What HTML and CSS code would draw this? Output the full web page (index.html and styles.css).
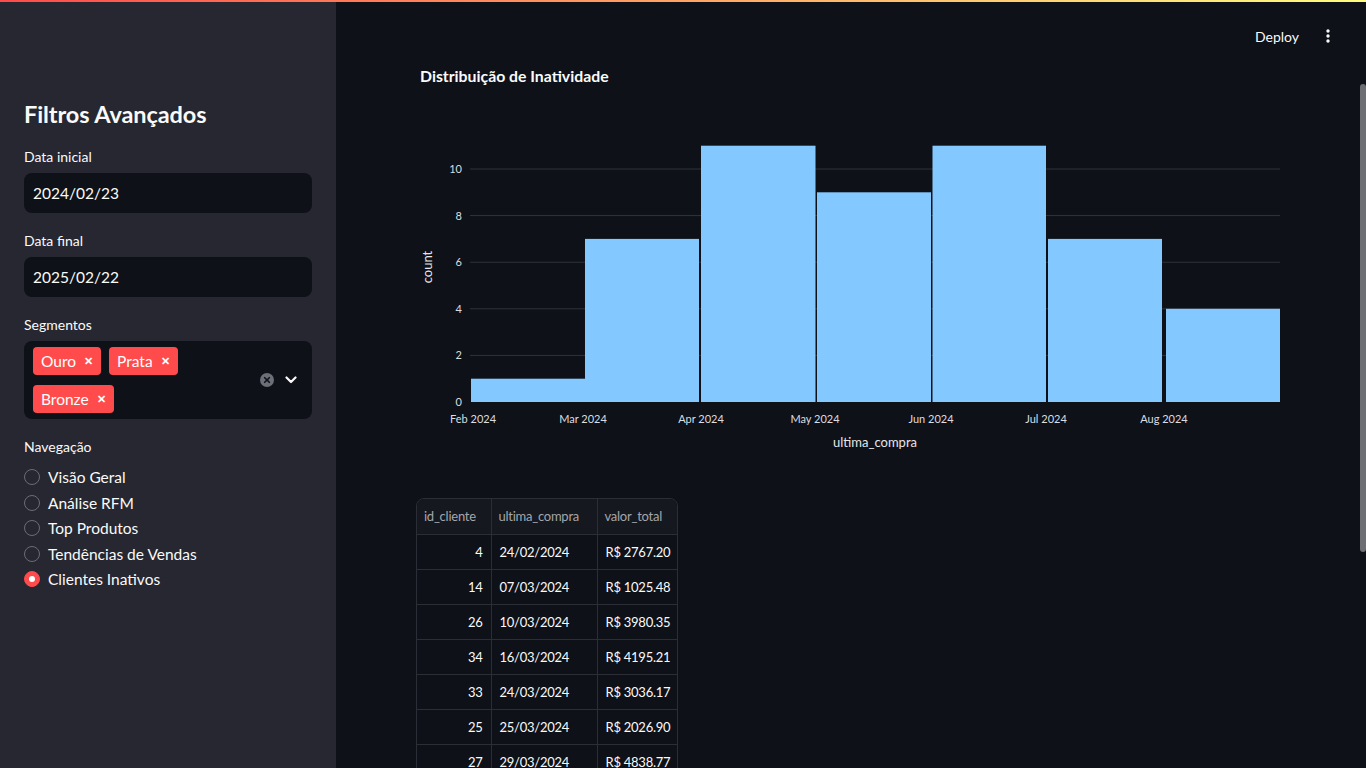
FILE: index.html
```html
<!DOCTYPE html>
<html lang="pt">
<head>
<meta charset="utf-8">
<title>Clientes Inativos</title>
<link rel="stylesheet" href="styles.css">
</head>
<body>
<div class="decoration"></div>
<div class="app">
  <aside class="sidebar">
    <h2 class="side-title">Filtros Avançados</h2>
    <div class="field">
      <label class="field-label">Data inicial</label>
      <div class="input">2024/02/23</div>
    </div>
    <div class="field">
      <label class="field-label">Data final</label>
      <div class="input">2025/02/22</div>
    </div>
    <div class="field">
      <label class="field-label">Segmentos</label>
      <div class="multiselect">
        <div class="tags">
          <span class="tag">Ouro <span class="tag-x">✕</span></span>
          <span class="tag">Prata <span class="tag-x">✕</span></span>
          <span class="tag">Bronze <span class="tag-x">✕</span></span>
        </div>
        <div class="ms-icons">
          <svg class="clear-ico" width="14" height="14" viewBox="0 0 14 14"><circle cx="7" cy="7" r="7" fill="#6c6e78"/><path d="M4.7 4.7l4.6 4.6M9.3 4.7l-4.6 4.6" stroke="#0e1117" stroke-width="1.6" stroke-linecap="round"/></svg>
          <svg class="chev-ico" width="12" height="8" viewBox="0 0 12 8"><path d="M1.5 1.5l4.5 4.5 4.5-4.5" fill="none" stroke="#fafafa" stroke-width="2.2" stroke-linecap="round" stroke-linejoin="round"/></svg>
        </div>
      </div>
    </div>
    <div class="field nav">
      <label class="field-label">Navegação</label>
      <div class="radios">
        <div class="radio"><span class="dot"></span>Visão Geral</div>
        <div class="radio"><span class="dot"></span>Análise RFM</div>
        <div class="radio"><span class="dot"></span>Top Produtos</div>
        <div class="radio"><span class="dot"></span>Tendências de Vendas</div>
        <div class="radio checked"><span class="dot"></span>Clientes Inativos</div>
      </div>
    </div>
  </aside>
  <main class="main">
    <header class="topbar">
      <span class="deploy">Deploy</span>
      <svg class="kebab" width="4" height="14" viewBox="0 0 4 14"><circle cx="2" cy="2" r="1.7" fill="#fafafa"/><circle cx="2" cy="7" r="1.7" fill="#fafafa"/><circle cx="2" cy="12" r="1.7" fill="#fafafa"/></svg>
    </header>
    <section class="content">
      <svg class="chart" width="870" height="410" viewBox="0 0 870 410">
        <text class="c-title" x="4" y="26">Distribuição de Inatividade</text>
        <g class="grid">
          <line x1="54" x2="864" y1="299.4" y2="299.4"/>
          <line x1="54" x2="864" y1="252.8" y2="252.8"/>
          <line x1="54" x2="864" y1="206.2" y2="206.2"/>
          <line x1="54" x2="864" y1="159.6" y2="159.6"/>
          <line x1="54" x2="864" y1="113" y2="113"/>
        </g>
        <g class="bars">
          <rect x="55" y="322.7" width="114" height="23.3"/>
          <rect x="169" y="182.9" width="114" height="163.1"/>
          <rect x="285" y="89.7" width="114.5" height="256.3"/>
          <rect x="401" y="136.3" width="114" height="209.7"/>
          <rect x="516.5" y="89.7" width="113.5" height="256.3"/>
          <rect x="632" y="182.9" width="114" height="163.1"/>
          <rect x="750" y="252.8" width="114" height="93.2"/>
        </g>
        <g class="yticks">
          <text x="46" y="350">0</text>
          <text x="46" y="303.4">2</text>
          <text x="46" y="256.8">4</text>
          <text x="46" y="210.2">6</text>
          <text x="46" y="163.6">8</text>
          <text x="46" y="117">10</text>
        </g>
        <g class="xticks">
          <text x="57" y="367">Feb 2024</text>
          <text x="167" y="367">Mar 2024</text>
          <text x="285" y="367">Apr 2024</text>
          <text x="399" y="367">May 2024</text>
          <text x="515" y="367">Jun 2024</text>
          <text x="630" y="367">Jul 2024</text>
          <text x="748" y="367">Aug 2024</text>
        </g>
        <text class="x-title" x="459" y="391">ultima_compra</text>
        <text class="y-title" transform="translate(15.5 211) rotate(-90)">count</text>
      </svg>
      <div class="table-wrap">
        <table class="df">
          <colgroup><col class="c1"><col class="c2"><col class="c3"></colgroup>
          <thead>
            <tr><th>id_cliente</th><th>ultima_compra</th><th>valor_total</th></tr>
          </thead>
          <tbody>
            <tr><td class="num">4</td><td>24/02/2024</td><td class="num">R$ 2767.20</td></tr>
            <tr><td class="num">14</td><td>07/03/2024</td><td class="num">R$ 1025.48</td></tr>
            <tr><td class="num">26</td><td>10/03/2024</td><td class="num">R$ 3980.35</td></tr>
            <tr><td class="num">34</td><td>16/03/2024</td><td class="num">R$ 4195.21</td></tr>
            <tr><td class="num">33</td><td>24/03/2024</td><td class="num">R$ 3036.17</td></tr>
            <tr><td class="num">25</td><td>25/03/2024</td><td class="num">R$ 2026.90</td></tr>
            <tr><td class="num">27</td><td>29/03/2024</td><td class="num">R$ 4838.77</td></tr>
            <tr><td class="num">8</td><td>02/04/2024</td><td class="num">R$ 1543.02</td></tr>
          </tbody>
        </table>
      </div>
    </section>
    <div class="scrollbar"></div>
  </main>
</div>
</body>
</html>
```
FILE: styles.css
```css
* { box-sizing: border-box; }
html, body {
  margin: 0;
  padding: 0;
  width: 1366px;
  height: 768px;
  overflow: hidden;
  background: #0e1117;
  color: #fafafa;
  font-family: Lato, "Noto Sans", sans-serif;
}
.decoration {
  position: absolute;
  top: 0;
  left: 0;
  right: 0;
  height: 2px;
  background: linear-gradient(90deg, #ff4b4b, #fffd80);
  z-index: 5;
}
.app {
  display: flex;
  height: 768px;
}
.sidebar {
  width: 336px;
  flex: 0 0 336px;
  background: #262730;
  padding: 98px 24px 0 24px;
}
.side-title {
  margin: 0 0 17px 0;
  font-size: 23.5px;
  font-weight: 700;
  line-height: 32px;
  letter-spacing: -0.1px;
}
.field { margin-bottom: 18px; }
.field-label {
  display: block;
  font-size: 14px;
  line-height: 20px;
  margin-bottom: 6px;
}
.input {
  height: 40px;
  background: #0e1117;
  border-radius: 8px;
  padding: 0 9px;
  font-size: 15.5px;
  line-height: 40px;
}
.multiselect {
  background: #0e1117;
  border-radius: 8px;
  min-height: 77px;
  display: flex;
  align-items: center;
  padding: 6px 15px 6px 9px;
  margin-top: 1px;
}
.tags {
  flex: 1;
  display: flex;
  flex-wrap: wrap;
  gap: 10px 8px;
}
.tag {
  display: inline-flex;
  align-items: center;
  height: 28px;
  padding: 0 8px;
  background: #ff4b4b;
  border-radius: 4px;
  font-size: 15.5px;
  color: #fff;
}
.tag-x {
  font-size: 11px;
  margin-left: 8px;
  font-weight: 700;
}
.ms-icons {
  display: flex;
  align-items: center;
  gap: 11px;
}
.nav { margin-top: 0; }
.radios {
  display: flex;
  flex-direction: column;
  gap: 5.5px;
  margin-top: 10px;
}
.radio {
  display: flex;
  align-items: center;
  font-size: 15.5px;
  line-height: 20px;
}
.dot {
  width: 16px;
  height: 16px;
  border-radius: 50%;
  border: 1px solid #6b6d76;
  margin-right: 8px;
  flex: 0 0 16px;
}
.radio.checked .dot {
  background: #ff4b4b;
  border-color: #ff4b4b;
  position: relative;
}
.radio.checked .dot::after {
  content: "";
  position: absolute;
  left: 4px;
  top: 4px;
  width: 6px;
  height: 6px;
  border-radius: 50%;
  background: #fff;
}
.main {
  flex: 1;
  position: relative;
  overflow: hidden;
}
.topbar {
  height: 56px;
  display: flex;
  justify-content: flex-end;
  align-items: center;
  padding: 16px 36px 0 0;
  gap: 27px;
}
.deploy {
  font-size: 14px;
}
.content {
  padding: 0 80px 0 80px;
}
.chart {
  display: block;
}
.chart text {
  font-family: Lato, "Noto Sans", sans-serif;
}
.c-title {
  font-size: 15.8px;
  font-weight: 700;
  fill: #fafafa;
}
.grid line {
  stroke: #31333d;
  stroke-width: 1;
}
.bars rect { fill: #83c9ff; }
.yticks text {
  font-size: 11px;
  fill: #dcdde0;
  text-anchor: end;
}
.xticks text {
  font-size: 11px;
  fill: #dcdde0;
  text-anchor: middle;
}
.x-title {
  font-size: 13px;
  fill: #e6e6e8;
  text-anchor: middle;
}
.y-title {
  font-size: 13px;
  fill: #e6e6e8;
  text-anchor: middle;
}
.table-wrap {
  margin-top: 32px;
  display: inline-block;
  border: 1px solid #2b2e37;
  border-radius: 8px;
  overflow: hidden;
}
.df {
  border-collapse: collapse;
  table-layout: fixed;
  width: 260px;
  font-size: 13px;
  letter-spacing: -0.25px;
}
.df col.c1 { width: 74px; }
.df col.c2 { width: 106px; }
.df col.c3 { width: 80px; }
.df th {
  height: 35px;
  font-weight: 400;
  color: #a4a6ac;
  background: #15181f;
  text-align: left;
  padding: 0 7px;
  border-right: 1px solid #2b2e37;
  border-bottom: 1px solid #2b2e37;
  white-space: nowrap;
  overflow: hidden;
}
.df td {
  height: 35px;
  padding: 0 8px;
  border-right: 1px solid #2b2e37;
  border-bottom: 1px solid #2b2e37;
  white-space: nowrap;
  overflow: hidden;
}
.df th:last-child, .df td:last-child { border-right: none; }
.df td.num { text-align: right; }
.scrollbar {
  position: absolute;
  right: 0;
  top: 84px;
  width: 6px;
  height: 468px;
  border-radius: 3px;
  background: #6c6e73;
}
```
